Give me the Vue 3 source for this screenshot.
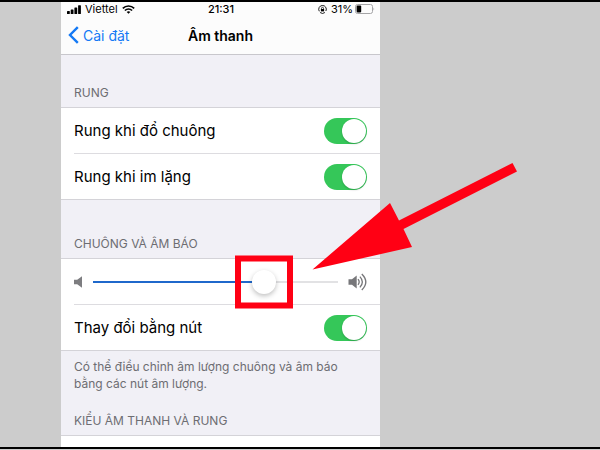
<script setup>
import { computed, ref } from 'vue';

const vibration = ref([
  { id: 'ring', label: 'Rung khi đổ chuông', on: true },
  { id: 'silent', label: 'Rung khi im lặng', on: true },
]);

const volume = ref(72);
const changeWithButtons = ref(true);

const volumeStyle = computed(() => ({ '--volume': volume.value / 100 }));
</script>

<template>
  <div class="stage">
    <main class="phone">
      <div class="status-bar">
        <div class="carrier">
          <svg width="14" height="9" viewBox="0 0 14 9" aria-hidden="true">
            <rect x="0" y="6" width="2.8" height="3" rx="0.6" />
            <rect x="3.7" y="4.4" width="2.8" height="4.6" rx="0.6" />
            <rect x="7.4" y="2.4" width="2.8" height="6.6" rx="0.6" />
            <rect x="11.1" y="0.2" width="2.8" height="8.8" rx="0.6" />
          </svg>
          <span>Viettel</span>
          <svg width="13" height="9" viewBox="0 0 13 9" fill="none" stroke="#000" stroke-width="1.7" aria-hidden="true">
            <path d="M0.8 3.3 C4 0.2 9 0.2 12.2 3.3" />
            <path d="M2.9 5.5 C5 3.5 8 3.5 10.1 5.5" />
            <path d="M4.7 6.9 C5.8 6 7.2 6 8.3 6.9 L6.5 8.8 Z" fill="#000" stroke="none" />
          </svg>
        </div>
        <time>21:31</time>
        <div class="battery">
          <svg class="lock" width="9" height="9" viewBox="0 0 9 9" fill="none" stroke="#000" aria-hidden="true">
            <path d="M1.3 6.3 A3.8 3.8 0 1 1 7.9 6 M2.1 7.5 A3.8 3.8 0 0 0 6.9 7.5" stroke-width="0.9" />
            <rect x="2.9" y="4" width="3.2" height="2.4" fill="#000" stroke="none" />
            <path d="M3.5 4.2 V3.3 A1 1 0 0 1 5.5 3.3 V4.2" stroke-width="0.7" />
          </svg>
          <span>31%</span>
          <svg width="20" height="10" viewBox="0 0 20 10" aria-hidden="true">
            <rect x="0.5" y="0.5" width="17" height="9" rx="2" fill="none" stroke="#a5a5a7" />
            <rect x="1.6" y="1.6" width="4.6" height="6.8" rx="0.8" />
            <path d="M18.5 3.4 Q20 5 18.5 6.6 Z" fill="#a5a5a7" />
          </svg>
        </div>
      </div>

      <header class="nav">
        <a href="#" class="back">
          <svg width="11" height="18" viewBox="0 0 11 18" fill="none" stroke="#1479f5" stroke-width="2.4" aria-hidden="true">
            <path d="M9.8 1.2 L2 9 L9.8 16.8" />
          </svg>
          Cài đặt
        </a>
        <h1>Âm thanh</h1>
      </header>

      <h2 class="first">Rung</h2>
      <div class="group">
        <div v-for="item in vibration" :key="item.id" class="row">
          <label :for="item.id">{{ item.label }}</label>
          <input :id="item.id" v-model="item.on" type="checkbox" class="switch">
        </div>
      </div>

      <h2>Chuông và âm báo</h2>
      <div class="group">
        <div class="row volume-row">
          <svg width="9" height="12" viewBox="0 0 9 12" fill="#7d7d80" aria-hidden="true">
            <path d="M0 3.8 H3.2 L8 0.3 V11.7 L3.2 8.2 H0 Z" />
          </svg>
          <div class="slider" :style="volumeStyle">
            <input v-model.number="volume" type="range" min="0" max="100" aria-label="Âm lượng">
            <div class="marker"></div>
            <svg class="arrow" width="206" height="107" viewBox="0 0 206 107" aria-hidden="true">
              <path d="M0.5 106.5 L78 40 L87 57.5 L200.5 0 L205 8.5 L91.5 66 L100 84 Z" fill="#ff0014" />
            </svg>
          </div>
          <svg width="19" height="18" viewBox="0 0 19 18" fill="none" stroke="#77777a" stroke-width="1.3" aria-hidden="true">
            <path d="M0.5 6.3 H4 L8.7 2.6 V15.4 L4 11.7 H0.5 Z" fill="#77777a" stroke="none" />
            <path d="M10 6.2 Q12.4 9 10 11.8" />
            <path d="M11.9 3.6 Q16.8 9 11.9 14.4" />
            <path d="M13.8 1 Q21.8 9 13.8 17" />
          </svg>
        </div>
        <div class="row">
          <label for="buttons">Thay đổi bằng nút</label>
          <input id="buttons" v-model="changeWithButtons" type="checkbox" class="switch">
        </div>
      </div>
      <p>Có thể điều chỉnh âm lượng chuông và âm báo bằng các nút âm lượng.</p>

      <h2 class="last">Kiểu âm thanh và rung</h2>
      <div class="group rest"></div>
    </main>
  </div>
</template>

<style>
body {
  background: #ccc;
}
</style>

<style scoped>
.stage {
  box-sizing: border-box;
  min-height: calc(100vh - 1px);
  display: grid;
  grid-template-columns: 61fr 319fr 220fr;
  border-block: 2px solid #000;
  overflow: hidden;
  font-family: Inter, "Noto Sans", sans-serif;
  color: #000;
}
.phone {
  grid-column: 2;
  display: flex;
  flex-direction: column;
  min-width: 0;
  background: #f1f0f6;
}
.status-bar {
  display: grid;
  grid-template-columns: 1fr auto 1fr;
  align-items: center;
  height: 14px;
  padding: 0 5px 0 6px;
  background: #fcfcfc;
  font-size: 11px;
  line-height: 14px;
}
.status-bar time {
  font-weight: 500;
}
.carrier,
.battery {
  display: flex;
  align-items: center;
  gap: 4px;
}
.battery {
  justify-content: flex-end;
  gap: 2px;
}
.lock {
  margin-right: 2px;
}
.nav {
  display: grid;
  grid-template-columns: 1fr auto 1fr;
  align-items: center;
  height: 38px;
  padding: 0 7px;
  background: #fcfcfc;
  border-bottom: 1px solid #c8c7cc;
}
.back {
  display: flex;
  align-items: center;
  gap: 4px;
  color: #1479f5;
  font-size: 14px;
  text-decoration: none;
}
h1 {
  margin: 0;
  font-size: 14px;
  font-weight: 600;
}
h2 {
  display: flex;
  align-items: flex-end;
  box-sizing: border-box;
  height: 58px;
  margin: 0;
  padding: 0 13px 6px;
  color: #6d6d72;
  font-size: 12px;
  font-weight: 400;
  line-height: 16px;
  text-transform: uppercase;
}
.first {
  height: 52px;
}
.last {
  height: 43px;
}
.group {
  background: #fff;
  border-block: 1px solid #d4d3d8;
}
.row {
  display: flex;
  align-items: center;
  justify-content: space-between;
  height: 45px;
  margin-left: 13px;
  padding-right: 13px;
  font-size: 15px;
}
.row + .row {
  border-top: 1px solid #dddce0;
}
.rest {
  flex: 1;
  min-height: 11px;
  border-bottom: 0;
}
.switch {
  appearance: none;
  display: flex;
  width: 43px;
  height: 26px;
  margin: 0;
  padding: 1px;
  box-sizing: border-box;
  border-radius: 13px;
  background: #e4e4e6;
  cursor: pointer;
}
.switch::before {
  content: "";
  width: 24px;
  height: 24px;
  border-radius: 50%;
  background: #fff;
  box-shadow: 0 1px 2px rgba(0, 0, 0, .2);
}
.switch:checked {
  justify-content: flex-end;
  background: #35c759;
}
.volume-row {
  gap: 10px;
}
.slider {
  --thumb: calc(12px + (100% - 24px) * var(--volume));
  position: relative;
  flex: 1;
  height: 24px;
}
.slider input {
  appearance: none;
  display: block;
  width: 100%;
  height: 24px;
  margin: 0;
  background: linear-gradient(to right, #1f68cb var(--thumb), #e2e2e4 var(--thumb)) center / 100% 2px no-repeat;
}
.slider input::-webkit-slider-thumb {
  appearance: none;
  width: 24px;
  height: 24px;
  border-radius: 50%;
  background: #fff;
  box-shadow: 0 2px 5px rgba(0, 0, 0, .25);
}
.marker {
  position: absolute;
  top: 50%;
  left: var(--thumb);
  box-sizing: border-box;
  width: 58px;
  height: 53px;
  border: 6px solid #ff0014;
  transform: translate(-50%, -50%);
  pointer-events: none;
}
.arrow {
  position: absolute;
  bottom: 24px;
  left: calc(var(--thumb) + 48px);
  pointer-events: none;
}
p {
  margin: 7px 13px 0;
  color: #6d6d72;
  font-size: 12px;
  line-height: 17px;
}
</style>
